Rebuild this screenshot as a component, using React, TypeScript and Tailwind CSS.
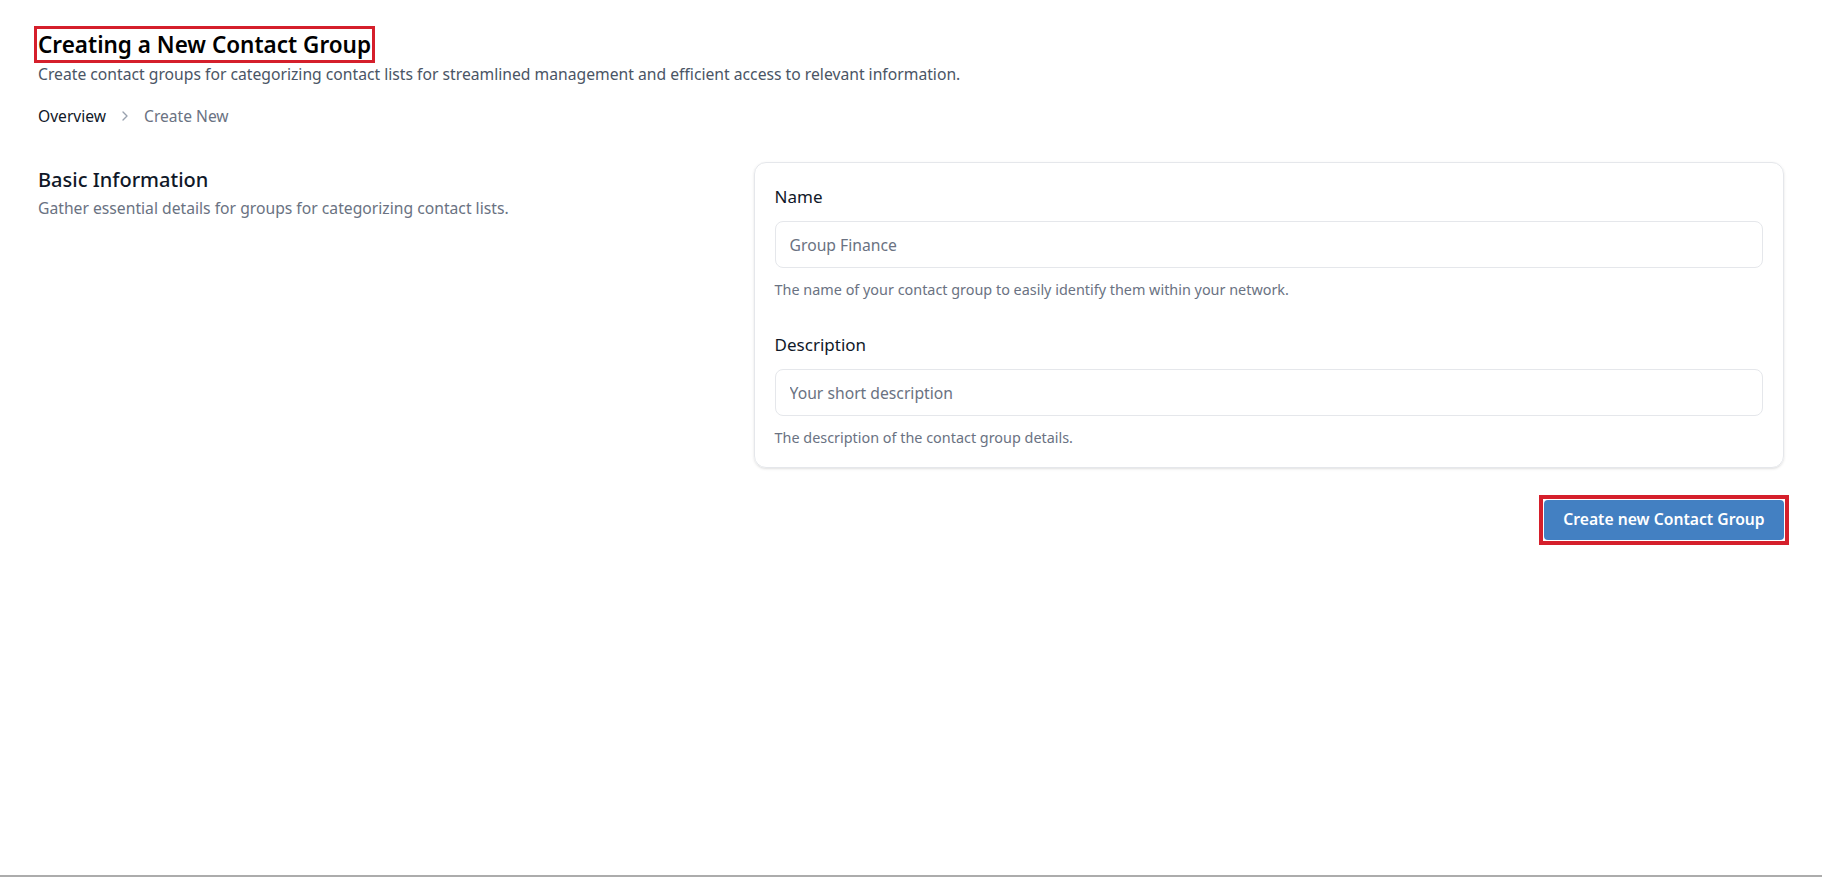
import { ChevronRight } from 'lucide-react';

const font = "font-['Noto_Sans',_'Liberation_Sans',_sans-serif]";

function Field({ label, placeholder, help, className = '' }: { label: string; placeholder: string; help: string; className?: string }) {
  return (
    <div className={className}>
      <label className="block text-[17px] leading-6 text-gray-900 mb-3">{label}</label>
      <input
        placeholder={placeholder}
        className="w-full h-[47px] px-[14px] rounded-lg border border-gray-200 text-[15.7px] text-gray-900 placeholder:text-gray-500 outline-none"
      />
      <p className="mt-3 text-[14.4px] leading-5 text-gray-500">{help}</p>
    </div>
  );
}

export default function App() {
  return (
    <div className={`min-h-screen bg-white border-b-2 border-[#acacac] ${font}`}>
      <div className="px-[38px] pt-[30px]">
        <h1 className="inline-block text-[22.5px] leading-[29px] font-semibold text-black outline-[3px] outline-solid outline-[#d51f2b] outline-offset-1">
          Creating a New Contact Group
        </h1>
        <p className="mt-[3px] text-[15.7px] leading-6 text-gray-600">
          Create contact groups for categorizing contact lists for streamlined management and efficient access to relevant information.
        </p>
        <nav className="mt-[18px] flex items-center gap-[11px] text-[15.6px] leading-6">
          <span className="text-gray-900">Overview</span>
          <ChevronRight size={16} className="text-gray-400" />
          <span className="text-gray-500">Create New</span>
        </nav>

        <div className="mt-[34px] grid grid-cols-5 gap-[43px]">
          <div className="col-span-2">
            <h2 className="mt-[2px] text-[20px] leading-8 font-medium text-gray-900">Basic Information</h2>
            <p className="text-[15.7px] leading-6 text-gray-500">Gather essential details for groups for categorizing contact lists.</p>
          </div>
          <div className="col-span-3">
            <div className="rounded-xl border border-gray-200 shadow-sm px-5 pt-[22px] pb-[19px]">
              <Field
                label="Name"
                placeholder="Group Finance"
                help="The name of your contact group to easily identify them within your network."
              />
              <Field
                className="mt-[33px]"
                label="Description"
                placeholder="Your short description"
                help="The description of the contact group details."
              />
            </div>
            <div className="mt-[32px] flex justify-end">
              <div className="inline-flex outline-4 outline-solid outline-[#d51f2b] outline-offset-1">
                <button className="h-10 w-[240px] rounded bg-[#4380c2] text-white text-[15.7px] font-semibold">
                  Create new Contact Group
                </button>
              </div>
            </div>
          </div>
        </div>
      </div>
    </div>
  );
}
